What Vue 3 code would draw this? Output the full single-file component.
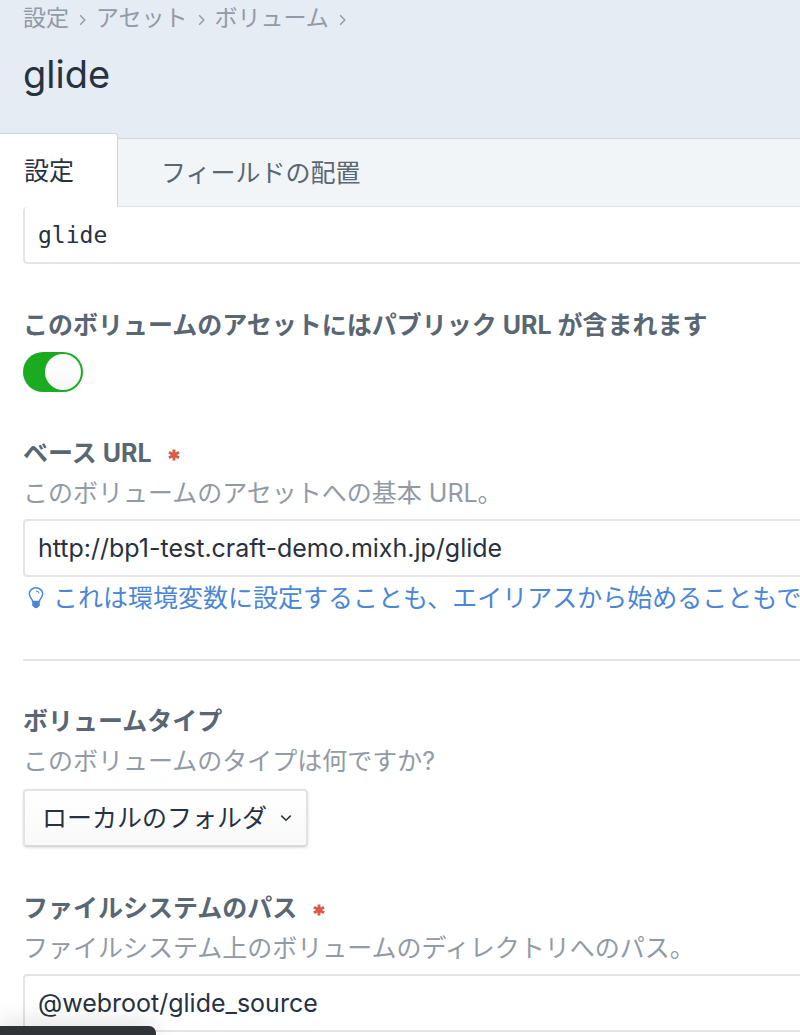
<script setup>
import { ref } from 'vue'

const crumbs = ['設定', 'アセット', 'ボリューム']
const handle = ref('glide')
const hasUrls = ref(true)
const baseUrl = ref('http://bp1-test.craft-demo.mixh.jp/glide')
const volumeType = ref('local')
const path = ref('@webroot/glide_source')
</script>

<template>
  <div class="page">
    <header class="header">
      <nav class="crumbs" aria-label="breadcrumb">
        <template v-for="c in crumbs" :key="c">
          <a href="#">{{ c }}</a>
          <svg class="sep" viewBox="0 0 6 12" aria-hidden="true">
            <path d="M0.7 1.2 5.3 6 0.7 10.8" fill="none" stroke="currentColor" stroke-width="1.4" />
          </svg>
        </template>
      </nav>
      <h1>glide</h1>
    </header>

    <nav class="tabs">
      <a href="#settings" class="tab active">設定</a>
      <div class="rest">
        <a href="#layout" class="tab">フィールドの配置</a>
      </div>
    </nav>

    <main class="content">
      <div class="field">
        <input v-model="handle" class="text code first" type="text" aria-label="handle" />
      </div>

      <div class="field">
        <label class="heading" for="urls">このボリュームのアセットにはパブリック URL が含まれます</label>
        <input id="urls" v-model="hasUrls" class="switch" type="checkbox" role="switch" />
      </div>

      <div class="field last-of-group">
        <label class="heading" for="base">ベース URL
          <svg class="req" viewBox="0 0 12 12" aria-hidden="true">
            <path d="M6 0.5V11.5M1 3.2 11 8.8M11 3.2 1 8.8" stroke="currentColor" stroke-width="2.9" />
          </svg>
        </label>
        <p class="note">このボリュームのアセットへの基本 URL。</p>
        <input id="base" v-model="baseUrl" class="text" type="text" />
        <p class="tip">
          <svg class="bulb" viewBox="0 0 16 22" aria-hidden="true">
            <path d="M4.6 14.5C4.6 11.8 1.3 10.7 1.3 7A6.7 6.2 0 0 1 14.7 7C14.7 10.7 11.4 11.8 11.4 14.5Z" fill="none" stroke="currentColor" stroke-width="1.5" />
            <path d="M8 4Q10.6 4.1 11.2 6.4" fill="none" stroke="currentColor" stroke-width="1.1" />
            <path d="M4.2 14H11.8V18.5L9.8 20.4Q8 22 6.2 20.4L4.2 18.5Z" fill="currentColor" />
          </svg>
          <span>これは環境変数に設定することも、エイリアスから始めることもで</span>
        </p>
      </div>

      <hr />

      <div class="field">
        <label class="heading" for="type">ボリュームタイプ</label>
        <p class="note">このボリュームのタイプは何ですか?</p>
        <div class="select">
          <select id="type" v-model="volumeType">
            <option value="local">ローカルのフォルダ</option>
          </select>
          <svg class="chevron" viewBox="0 0 12 8" aria-hidden="true">
            <path d="M1.3 1.6 6 6.2 10.7 1.6" fill="none" stroke="currentColor" stroke-width="1.5" />
          </svg>
        </div>
      </div>

      <div class="field">
        <label class="heading" for="path">ファイルシステムのパス
          <svg class="req" viewBox="0 0 12 12" aria-hidden="true">
            <path d="M6 0.5V11.5M1 3.2 11 8.8M11 3.2 1 8.8" stroke="currentColor" stroke-width="2.9" />
          </svg>
        </label>
        <p class="note">ファイルシステム上のボリュームのディレクトリへのパス。</p>
        <input id="path" v-model="path" class="text" type="text" />
      </div>
    </main>

    <div class="status"></div>
  </div>
</template>

<style>
body {
  margin: 0;
  background: #fff;
}
</style>

<style scoped>
.page {
  overflow: hidden;
  font-family: Inter, "Noto Sans CJK JP", sans-serif;
  font-size: 25px;
  line-height: 40px;
  color: #28323f;
  white-space: nowrap;
}
.page * {
  box-sizing: border-box;
}
a {
  color: inherit;
  text-decoration: none;
}
.header {
  padding: 0 23px 34px;
  background: #e5ecf4;
}
.crumbs {
  display: flex;
  align-items: center;
  gap: 10px;
  height: 36px;
  font-size: 23px;
  line-height: 36px;
  color: #929aa5;
}
.sep {
  width: 7px;
  height: 12px;
  margin-top: 4px;
}
h1 {
  margin: 12px 0 0;
  font-size: 38px;
  font-weight: 400;
  line-height: 52px;
}
.tabs {
  display: flex;
  align-items: flex-end;
  margin-top: -1px;
  background: #e5ecf4;
  line-height: 68px;
}
.tab.active {
  padding: 3px 43px 2px 24px;
  border-top: 1px solid #cfd6dd;
  border-right: 1px solid #cfd6dd;
  border-top-right-radius: 3px;
  background: #fff;
}
.rest {
  flex: 1;
  height: 69px;
  padding-left: 43px;
  border-top: 1px solid #cfd5dc;
  border-bottom: 1px solid #dfe3e8;
  background: #f1f5f8;
  color: #596673;
}
.content {
  padding-left: 23px;
}
.field {
  margin-bottom: 41px;
}
.heading {
  display: flex;
  align-items: center;
  font-weight: 700;
  color: #596673;
}
.req {
  width: 12px;
  height: 12px;
  margin: 4px 0 0 16px;
  color: #da5a47;
}
.note {
  margin: 0 0 6px;
  color: #929aa5;
}
.text {
  display: block;
  width: 100%;
  height: 58px;
  padding: 0 13px;
  border: 2px solid #e4e5e7;
  border-right: 0;
  border-radius: 4px 0 0 4px;
  outline: 0;
  background: #fff;
  font: inherit;
  color: inherit;
}
.text.code {
  font-family: "DejaVu Sans Mono", monospace;
  font-size: 23px;
}
.text.first {
  height: 57px;
  border-top: 0;
}
.switch {
  appearance: none;
  display: flex;
  width: 60px;
  height: 40px;
  margin: 7px 0 0;
  padding: 2px;
  border-radius: 20px;
  background: #c3cad2;
}
.switch::before {
  content: "";
  width: 36px;
  height: 36px;
  border-radius: 50%;
  background: linear-gradient(#fff, #f8f8f8);
}
.switch:checked {
  justify-content: flex-end;
  background: #1bab21;
}
.tip {
  display: flex;
  align-items: center;
  gap: 9px;
  height: 42px;
  margin: 0;
  padding-left: 5px;
  color: #4a86d8;
}
.bulb {
  flex: none;
  width: 16px;
  height: 22px;
}
.last-of-group {
  margin-bottom: 40px;
}
hr {
  height: 2px;
  margin: 0 0 40px;
  border: 0;
  background: #e2e4e9;
}
.select {
  display: grid;
  width: fit-content;
  align-items: center;
  padding-top: 2px;
}
.select select {
  grid-area: 1 / 1;
  appearance: none;
  height: 58px;
  padding: 0 38px 0 17px;
  border: 2px solid #e2e3e4;
  border-bottom-color: #d8d9da;
  border-radius: 4px;
  background: linear-gradient(#fff, #f9f9f9);
  box-shadow: 0 1px 3px rgba(0, 0, 0, 0.12);
  font: inherit;
  color: inherit;
}
.chevron {
  grid-area: 1 / 1;
  justify-self: end;
  width: 12px;
  height: 8px;
  margin-right: 16px;
  pointer-events: none;
}
.content .field:last-child {
  margin-bottom: 0;
}
.status {
  position: fixed;
  bottom: 0;
  left: 0;
  width: 156px;
  height: 9px;
  border-top-right-radius: 7px;
  background: #303438;
  box-shadow: 0 0 24px rgba(0, 0, 0, 0.25);
}
</style>
